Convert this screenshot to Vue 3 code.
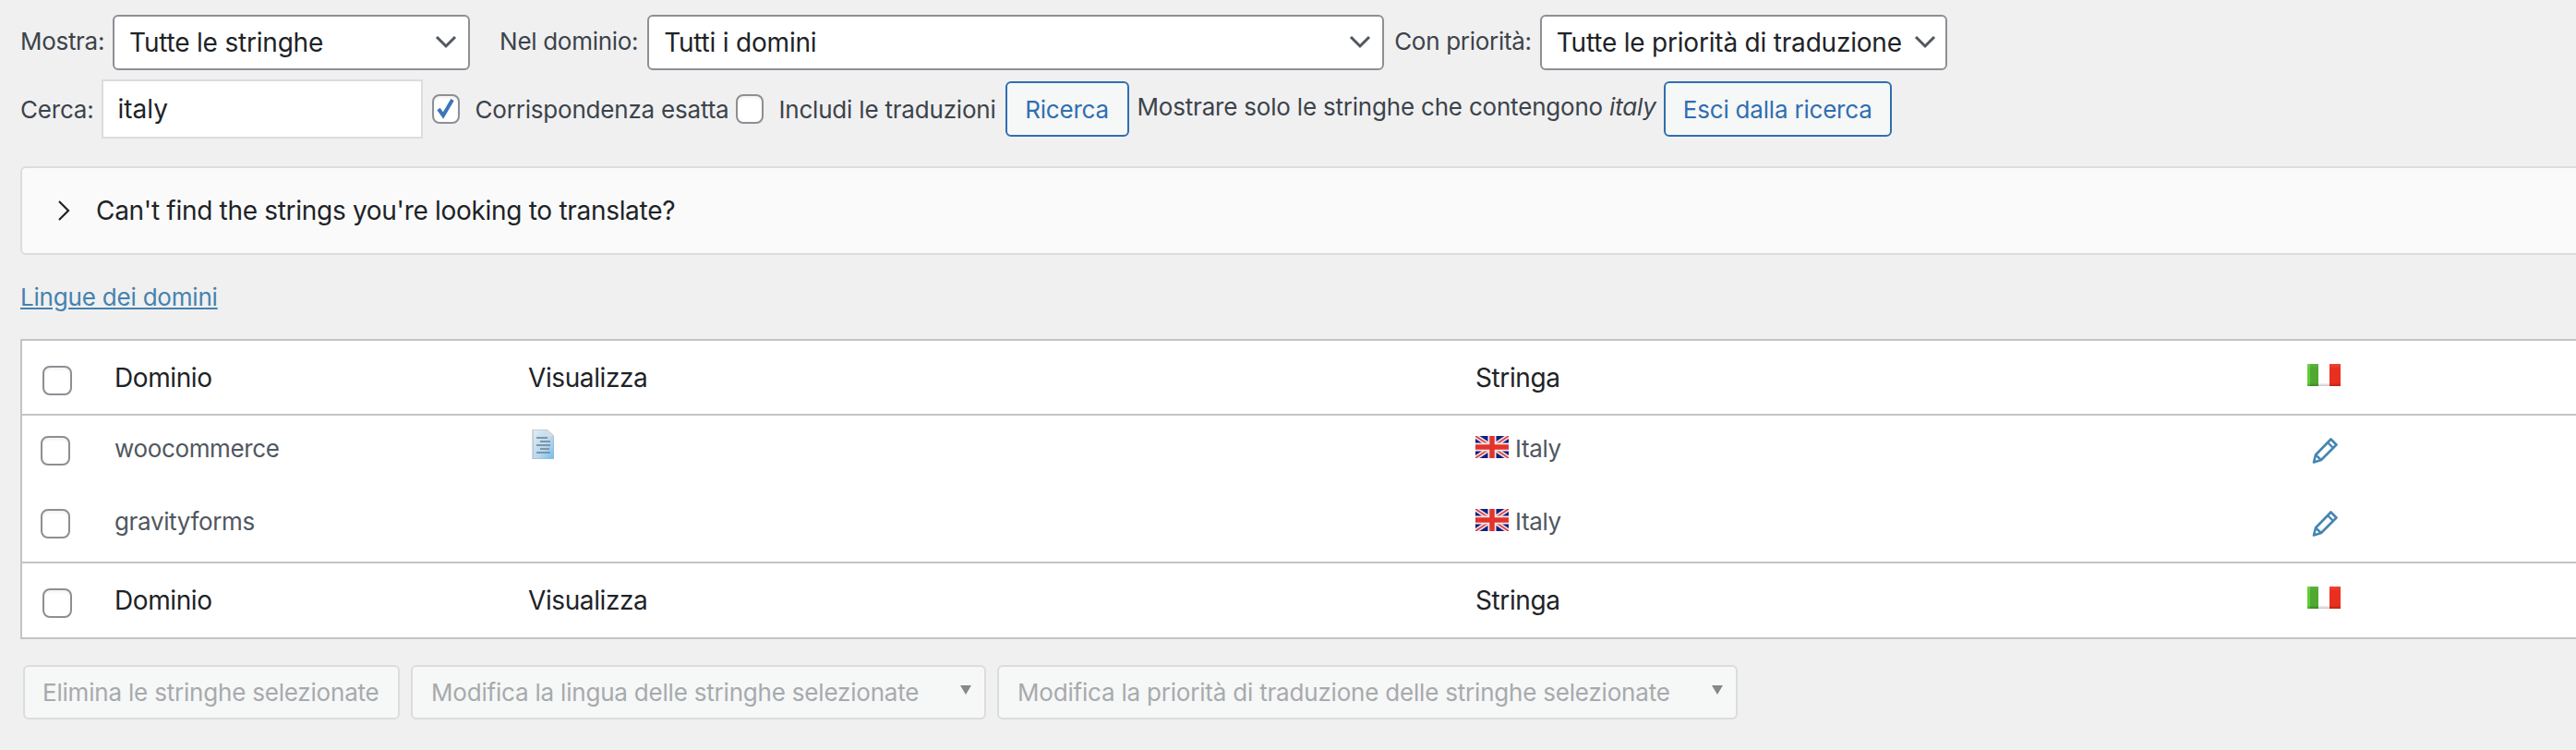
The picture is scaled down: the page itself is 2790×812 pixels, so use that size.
<script setup>
const rows = [
  { domain: 'woocommerce', doc: true },
  { domain: 'gravityforms', doc: false },
]
</script>

<template>
  <div class="page">
    <div class="filters">
      <span class="lbl l-mostra">Mostra:</span>
      <select class="sel s1"><option>Tutte le stringhe</option></select>
      <span class="lbl l-dom">Nel dominio:</span>
      <select class="sel s2"><option>Tutti i domini</option></select>
      <span class="lbl l-pri">Con priorità:</span>
      <select class="sel s3"><option>Tutte le priorità di traduzione</option></select>
    </div>
    <div class="search">
      <span class="lbl l-cerca">Cerca:</span>
      <input class="inp" type="text" value="italy" />
      <input class="cb cb-exact" type="checkbox" checked />
      <span class="lbl l-exact">Corrispondenza esatta</span>
      <input class="cb cb-incl" type="checkbox" />
      <span class="lbl l-incl">Includi le traduzioni</span>
      <button class="btn b-ric" type="button">Ricerca</button>
      <span class="lbl l-only">Mostrare solo le stringhe che contengono <em>italy</em></span>
      <button class="btn b-esci" type="button">Esci dalla ricerca</button>
    </div>

    <div class="notice">
      <svg class="chev" width="14" height="24" viewBox="0 0 14 24"><path d="M2 2l10 10L2 22" fill="none" stroke="#1d2327" stroke-width="2.2" /></svg>
      <span>Can't find the strings you're looking to translate?</span>
    </div>

    <a class="link" href="#">Lingue dei domini</a>

    <table class="tbl">
      <colgroup>
        <col class="c1" /><col class="c2" /><col class="c3" /><col class="c4" /><col class="c5" />
      </colgroup>
      <thead>
        <tr>
          <th><input class="cb cb-head" type="checkbox" /></th>
          <th>Dominio</th>
          <th>Visualizza</th>
          <th>Stringa</th>
          <th><svg class="flag-it" width="36" height="24" viewBox="0 0 36 24"><use href="#it-flag" /></svg></th>
        </tr>
      </thead>
      <tbody>
        <tr v-for="r in rows" :key="r.domain">
          <td><input class="cb cb-body" type="checkbox" /></td>
          <td>{{ r.domain }}</td>
          <td>
            <svg v-if="r.doc" class="doc" width="24" height="32" viewBox="0 0 24 32">
              <defs>
                <linearGradient id="docg" x1="0" y1="0" x2="1" y2="1">
                  <stop offset="0" stop-color="#e4edf4" />
                  <stop offset="0.6" stop-color="#b5d6ee" />
                  <stop offset="1" stop-color="#6dbcf0" />
                </linearGradient>
              </defs>
              <path d="M1 0h15l8 7v25H1z" fill="url(#docg)" stroke="#a9b4bc" stroke-width="1" />
              <path d="M16 0v7h8z" fill="#d8dde0" />
              <path d="M5 9h12M9 13h11M5 17h15M9 21h10M5 25h15" stroke="#7f95a8" stroke-width="2" />
            </svg>
          </td>
          <td class="str">
            <svg class="flag-uk" width="36" height="24" viewBox="0 0 36 24">
              <rect width="36" height="24" fill="#10207f" />
              <path d="M0 0l36 24M36 0L0 24" stroke="#f4dede" stroke-width="5" />
              <path d="M0 0l36 24M36 0L0 24" stroke="#d8404a" stroke-width="1.6" />
              <path d="M18 0v24M0 12h36" stroke="#f8e8e8" stroke-width="9" />
              <path d="M18 0v24M0 12h36" stroke="#e2342c" stroke-width="5.5" />
            </svg>
            <span>Italy</span>
          </td>
          <td>
            <svg class="pen" width="28" height="28" viewBox="0 0 28 28">
              <path d="M20.5 1.5l6 6L10 24l-8 2.5 2-8z" fill="none" stroke="#4585b2" stroke-width="2.6" stroke-linejoin="round" />
              <path d="M4 18.5l6 5.5M17 5l6 6" fill="none" stroke="#4585b2" stroke-width="2.4" />
            </svg>
          </td>
        </tr>
      </tbody>
      <tfoot>
        <tr>
          <th><input class="cb cb-head" type="checkbox" /></th>
          <th>Dominio</th>
          <th>Visualizza</th>
          <th>Stringa</th>
          <th><svg class="flag-it" width="36" height="24" viewBox="0 0 36 24"><use href="#it-flag" /></svg></th>
        </tr>
      </tfoot>
    </table>

    <div class="bulk">
      <button class="dis b-del" type="button" disabled>Elimina le stringhe selezionate</button>
      <select class="dis dsel d1" disabled><option>Modifica la lingua delle stringhe selezionate</option></select>
      <select class="dis dsel d2" disabled><option>Modifica la priorità di traduzione delle stringhe selezionate</option></select>
    </div>

    <svg class="defs" width="0" height="0">
      <defs>
        <linearGradient id="itshade" x1="0" y1="0" x2="0" y2="1">
          <stop offset="0" stop-color="#fff" stop-opacity="0.12" />
          <stop offset="0.2" stop-color="#fff" stop-opacity="0" />
          <stop offset="0.85" stop-color="#000" stop-opacity="0" />
          <stop offset="1" stop-color="#000" stop-opacity="0.22" />
        </linearGradient>
        <g id="it-flag">
          <rect width="12" height="24" fill="#4fa82f" />
          <rect width="3" height="24" fill="#5fcf38" />
          <rect x="12" width="12" height="24" fill="#fff" />
          <rect x="24" width="12" height="24" fill="#e92f1f" />
          <rect width="36" height="24" fill="url(#itshade)" />
        </g>
      </defs>
    </svg>
  </div>
</template>

<style>
html, body { margin: 0; background: #f0f0f1; }
</style>

<style scoped>
.page {
  width: 2790px;
  height: 812px;
  overflow: hidden;
  background: #f0f0f1;
  font-family: Inter, "Liberation Sans", sans-serif;
  color: #3c434a;
  box-sizing: border-box;
  padding: 16px 0 0 22px;
  position: relative;
}
.filters, .search { display: flex; align-items: center; white-space: nowrap; }
.filters { height: 60px; }
.search { height: 64px; margin-top: 10px; }
.lbl { font-size: 26px; letter-spacing: -0.2px; color: #3c434a; }
.filters .lbl { margin-bottom: 4px; letter-spacing: -0.3px; }
.sel {
  appearance: none;
  height: 60px;
  border: 2px solid #8c8f94;
  border-radius: 6px;
  box-sizing: border-box;
  padding: 0 16px;
  font: 28px Inter, "Liberation Sans", sans-serif;
  letter-spacing: -0.2px;
  color: #1d2327;
  background: #fff url("data:image/svg+xml,%3Csvg xmlns='http://www.w3.org/2000/svg' width='24' height='16' viewBox='0 0 24 16'%3E%3Cpath d='M2 2l10 10L22 2' fill='none' stroke='%2350575e' stroke-width='3'/%3E%3C/svg%3E") no-repeat right 12px center / 24px 16px;
}
.s1 { width: 387px; margin-left: 9px; }
.l-dom { margin-left: 32px; }
.s2 { width: 798px; margin-left: 10px; }
.l-pri { margin-left: 11px; }
.s3 { width: 441px; margin-left: 9px; background-position: right 10px center; padding-right: 36px; }
.inp {
  width: 348px;
  height: 64px;
  box-sizing: border-box;
  margin-left: 8px;
  border: 2px solid #dcdcde;
  border-radius: 0;
  background: #fff;
  padding: 0 16px;
  font: 28px Inter, "Liberation Sans", sans-serif;
  color: #1d2327;
  outline: none;
}
.cb {
  appearance: none;
  width: 30px;
  height: 32px;
  margin: 0;
  box-sizing: border-box;
  border: 2px solid #8c8f94;
  border-radius: 8px;
  background: #fff;
  box-shadow: inset 0 2px 3px rgba(0, 0, 0, 0.06);
  flex: none;
}
.cb-exact {
  margin-left: 10px;
  background: #fff url("data:image/svg+xml,%3Csvg xmlns='http://www.w3.org/2000/svg' width='24' height='26' viewBox='0 0 24 26'%3E%3Cpath d='M4 13l5 7L19 3' fill='none' stroke='%233b76b8' stroke-width='4'/%3E%3C/svg%3E") no-repeat center;
}
.l-exact { margin-left: 17px; }
.cb-incl { margin-left: 8px; }
.l-incl { margin-left: 16px; }
.btn {
  height: 60px;
  box-sizing: border-box;
  border: 2px solid #2f6fb0;
  border-radius: 6px;
  background: #f6f7f7;
  color: #2f6fb0;
  font: 26px Inter, "Liberation Sans", sans-serif;
  letter-spacing: -0.2px;
  padding: 0;
  flex: none;
}
.b-ric { width: 134px; margin-left: 10px; }
.l-only { margin-left: 9px; margin-bottom: 6px; }
.b-esci { width: 247px; margin-left: 8px; }

.notice {
  margin-top: 30px;
  width: 2800px;
  height: 96px;
  box-sizing: border-box;
  border: 2px solid #dcdcde;
  border-radius: 6px;
  background: #fafafa;
  display: flex;
  align-items: center;
  padding-left: 38px;
  font-size: 28px;
  letter-spacing: -0.3px;
  color: #1d2327;
}
.chev { margin-right: 28px; flex: none; }

.link {
  display: block;
  margin-top: 30px;
  font-size: 26px;
  line-height: 32px;
  letter-spacing: -0.2px;
  color: #4682ad;
  text-decoration: underline;
  width: max-content;
}

.tbl {
  margin-top: 29px;
  width: 2800px;
  table-layout: fixed;
  border-collapse: separate;
  border-spacing: 0;
  background: #fff;
  border: 2px solid #c3c4c7;
  border-right: 0;
}
.c1 { width: 80px; }
.c2 { width: 448px; }
.c3 { width: 1026px; }
.c4 { width: 901px; }
th, td { box-sizing: border-box; padding: 0 0 0 20px; text-align: left; vertical-align: middle; }
th { font-size: 28px; font-weight: 400; letter-spacing: -0.4px; color: #1d2327; }
thead th { height: 81px; border-bottom: 2px solid #c3c4c7; }
tfoot th { height: 82px; border-top: 2px solid #c3c4c7; }
td { font-size: 26px; letter-spacing: -0.35px; height: 79px; padding-bottom: 9px; color: #50575e; }
th:first-child, td:first-child { padding-left: 0; }
.cb-head { display: block; margin: 6px 0 0 22px; width: 32px; }
.cb-body { display: block; margin: 6px 0 0 20px; width: 32px; }
.doc { display: block; margin: -8px 0 0 4px; }
.str { white-space: nowrap; }
.flag-uk { vertical-align: -1px; margin-right: 7px; filter: blur(0.5px); }
.flag-it { display: block; margin-top: -6px; filter: blur(0.3px); }
.pen { display: block; margin: 6px 0 0 5px; }

.bulk { display: flex; margin-top: 28px; margin-left: 3px; gap: 12px; }
.dis {
  height: 59px;
  box-sizing: border-box;
  border: 2px solid #dcdcde;
  border-radius: 6px;
  background: #f6f7f7;
  color: #a7aaad;
  font: 26px Inter, "Liberation Sans", sans-serif;
  letter-spacing: -0.2px;
  padding: 0 20px;
  white-space: nowrap;
  text-align: left;
  opacity: 1;
}
.b-del { width: 408px; padding-left: 19px; }
.dsel {
  appearance: none;
  background: #f6f7f7 url("data:image/svg+xml,%3Csvg xmlns='http://www.w3.org/2000/svg' width='12' height='10'%3E%3Cpath d='M0 0h12L6 10z' fill='%23888'/%3E%3C/svg%3E") no-repeat right 14px top 20px;
}
.d1 { width: 623px; }
.d2 { width: 802px; }
.defs { position: absolute; }
</style>
